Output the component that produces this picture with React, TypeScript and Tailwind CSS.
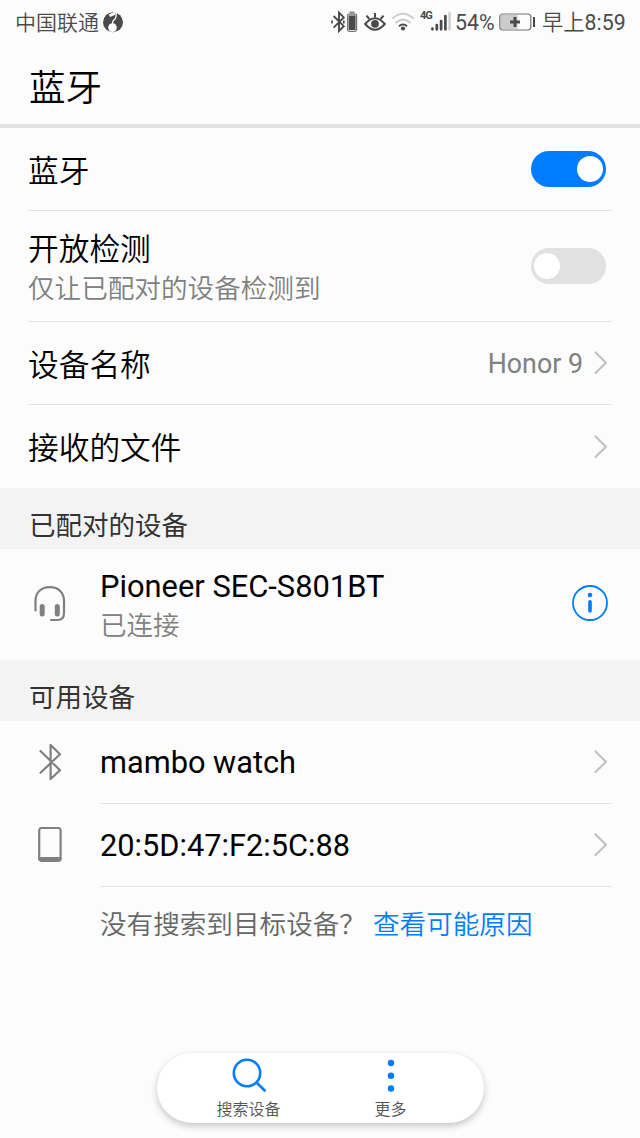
import React from "react";

const Chevron = () => (
  <svg className="h-6 w-3.5 shrink-0" viewBox="0 0 14 24" fill="none" stroke="#c2c2c2" strokeWidth="2.2" strokeLinecap="round" strokeLinejoin="round">
    <path d="M1.5 1.5L12 11.8L1.5 22" />
  </svg>
);

const Toggle = ({ on }: { on: boolean }) => (
  <div
    role="switch"
    aria-checked={on}
    className={`mr-px flex h-9 w-[75px] items-center rounded-full px-[3px] ${on ? "justify-end bg-[#007dff]" : "justify-start bg-[#e1e1e1]"}`}
  >
    <div className="h-[26px] w-[26px] rounded-full bg-white" />
  </div>
);

const StatusBar = () => (
  <div className="flex h-11 items-center pl-[15px] text-[21.3px] leading-[44px] text-[#4a4a4a]">
    <span className="w-[87px] pt-0.5 text-[21px] [font-weight:350]">中国联通</span>
    <svg className="h-[22px] w-[22px]" viewBox="0 0 22 22">
      <circle cx="11" cy="11.3" r="10" fill="#4a4a4a" />
      <path d="M7 3.8L14.8 1L13.6 7.2L10.8 10.2L10.5 14" fill="none" stroke="#fcfcfc" strokeWidth="1.3" />
      <path d="M7 3.8L13.8 1.6L13.4 3.8L8 6Z" fill="#fcfcfc" />
      <circle cx="10.5" cy="16.6" r="4.3" fill="#fcfcfc" />
    </svg>
    <svg className="ml-[207px] h-6 w-[27px]" viewBox="0 0 27 24" fill="none" stroke="#4a4a4a">
      <path d="M2.6 6L12.8 16.2L8 20.9V2.6L12.8 7.4L2.6 17.6" strokeWidth="1.9" />
      <path d="M1 10.4V13.4M12.8 10.4V13.4" strokeWidth="1.7" />
      <path d="M18.5 2.5H23.5" stroke="#888888" strokeWidth="2" />
      <rect x="16.6" y="4.1" width="9" height="17.2" rx="1.5" stroke="#777777" strokeWidth="1.2" />
      <rect x="17.6" y="5.4" width="7" height="14.6" fill="#4a4a4a" stroke="none" />
    </svg>
    <svg className="ml-[6px] h-6 w-[22px]" viewBox="0 0 22 24" fill="none" stroke="#4a4a4a" strokeWidth="2">
      <path d="M1.2 14Q11 2.5 20.8 14Q11 25.5 1.2 14Z" />
      <path d="M11 7.5V3M5.3 9L2.5 5.6M16.7 9L19.5 5.6" />
      <circle cx="11" cy="13.8" r="3.9" fill="#4a4a4a" stroke="none" />
    </svg>
    <svg className="ml-[5px] h-6 w-6" viewBox="0 0 24 24" fill="none" strokeWidth="2">
      <path d="M1.3 8.8Q12 -1.2 22.7 8.8" stroke="#d0d0d0" />
      <path d="M4.6 12.9Q12 6.2 19.4 12.9" stroke="#c8c8c8" />
      <path d="M8 16.2Q12 12.7 16 16.2" stroke="#4a4a4a" />
      <circle cx="12" cy="18.5" r="2.1" fill="#4a4a4a" stroke="none" />
    </svg>
    <span className="mb-3 ml-[5px] w-[11px] text-[11px] font-bold leading-5 tracking-[-1px]">4G</span>
    <svg className="h-6 w-5" viewBox="0 0 20 24" fill="none" stroke="#4a4a4a" strokeWidth="2.7" strokeLinecap="round">
      <path d="M1.4 18.5V19.3M5.8 15V19.3M10.1 11V19.3M14.4 6V19.3" />
      <path d="M18.6 3V19.3" stroke="#d2d2d2" />
    </svg>
    <span className="ml-1 w-[44px] pt-0.5">54%</span>
    <svg className="h-5 w-[38px]" viewBox="0 0 38 20" fill="none">
      <rect x="1.5" y="3" width="17" height="14" fill="#cccccc" />
      <rect x="0.8" y="2" width="31" height="16" rx="3" stroke="#777777" strokeWidth="1.2" />
      <path d="M11 10H21M16 5V15" stroke="#4a4a4a" strokeWidth="3" />
      <path d="M35 5V15" stroke="#4a4a4a" strokeWidth="2" />
    </svg>
    <span className="ml-[5px] whitespace-nowrap pt-0.5">
      <span className="[font-weight:350]">早上</span>8:59
    </span>
  </div>
);

const SectionTitle = ({ children }: { children: React.ReactNode }) => (
  <h2 className="h-[61px] bg-[#f3f3f3] pl-[29px] pt-[13px] text-[26.5px] leading-[50px] text-[#333333]">{children}</h2>
);

const availableDevices = [
  { name: "mambo watch", type: "bluetooth" },
  { name: "20:5D:47:F2:5C:88", type: "phone" },
];

const DeviceIcon = ({ type }: { type: string }) => (
  <svg className="mb-0.5 h-9 w-9 shrink-0" viewBox="0 0 36 36" fill="none" stroke="#808080" strokeWidth="2.2" strokeLinecap="round" strokeLinejoin="round">
    {type === "bluetooth" && <path d="M8.5 7L28 26.2L18.6 35V1L28 10.2L8.5 28.8" />}
    {type === "phone" && (
      <>
        <rect x="7.2" y="1" width="21.4" height="33" rx="2.5" />
        <path d="M8.5 32H27.5" strokeWidth="4" />
      </>
    )}
    {type === "headset" && (
      <>
        <path d="M3.5 24.5V15C3.5 6 9.5 1.2 18 1.2S32 6.5 32 15V27C32 31.5 29.7 34 25.5 34H19" />
        <path d="M10.2 20.5V28M25.3 20.5V28" strokeWidth="5" />
      </>
    )}
  </svg>
);

export default function App() {
  return (
    <div className="flex h-[1138px] w-[640px] flex-col overflow-hidden bg-[#fcfcfc] text-black [font-family:Roboto,'Noto_Sans_CJK_SC',sans-serif]">
      <StatusBar />
      <h1 className="h-[84px] border-b-4 border-[#e1e1e1] pl-[29px] pt-0.5 text-[36.5px] leading-[86px] [font-weight:350]">蓝牙</h1>

      <div className="mx-7 flex h-[83px] items-center justify-between border-b border-[#e3e3e3] pr-[5px] text-[30.7px]">
        <span className="pt-1.5 [font-weight:350]">蓝牙</span>
        <Toggle on />
      </div>
      <div className="mx-7 flex h-[111px] items-center justify-between border-b border-[#e3e3e3] pr-[5px]">
        <div className="pt-1.5 [font-weight:350]">
          <div className="text-[30.7px] leading-10">开放检测</div>
          <div className="text-[26.6px] leading-[38px] text-[#808080]">仅让已配对的设备检测到</div>
        </div>
        <Toggle on={false} />
      </div>
      <div className="mx-7 flex h-[83px] items-center border-b border-[#e3e3e3] pr-1 text-[30.7px]">
        <span className="flex-1 pt-1.5 [font-weight:350]">设备名称</span>
        <span className="mr-[11px] pt-[3px] text-[26.8px] text-[#808080]">Honor 9</span>
        <Chevron />
      </div>
      <div className="mx-7 flex h-[83px] items-center justify-between pr-1 text-[30.7px]">
        <span className="pt-1.5 [font-weight:350]">接收的文件</span>
        <Chevron />
      </div>

      <SectionTitle>已配对的设备</SectionTitle>
      <div className="flex h-[111px] items-center pl-8 pr-8">
        <DeviceIcon type="headset" />
        <div className="ml-8 flex-1 pt-[3px]">
          <div className="text-[30.85px] leading-10">Pioneer SEC-S801BT</div>
          <div className="text-[26.5px] leading-[38px] text-[#808080] [font-weight:350]">已连接</div>
        </div>
        <svg className="mb-[3px] h-9 w-9" viewBox="0 0 36 36" fill="none" stroke="#007dff">
          <circle cx="18" cy="18" r="17" strokeWidth="1.8" />
          <circle cx="18" cy="10" r="2.3" fill="#007dff" stroke="none" />
          <path d="M18 16.7V26" strokeWidth="3.6" strokeLinecap="round" />
        </svg>
      </div>

      <SectionTitle>可用设备</SectionTitle>
      {availableDevices.map((device) => (
        <div key={device.name} className="flex h-[83px] items-center pl-8 pr-7 last-of-type:h-[84px]">
          <DeviceIcon type={device.type} />
          <div className="ml-8 flex h-full flex-1 items-center justify-between border-b border-[#e3e3e3] pr-1 text-[30.75px]">
            <span className="pt-[3px]">{device.name}</span>
            <Chevron />
          </div>
        </div>
      ))}
      <p className="flex pl-[100px] pt-[19px] text-[26.6px] leading-[38px] text-[#666666] [font-weight:350]">
        <span className="w-[273px] whitespace-nowrap">没有搜索到目标设备？</span>
        <a className="text-[#007dff]">查看可能原因</a>
      </p>

      <div className="mx-auto mb-[15px] mt-auto flex h-[70px] w-[327px] justify-between rounded-full bg-white pl-[60px] pr-[77px] text-base leading-6 text-[#555555] shadow-[0_3px_7px_rgba(0,0,0,0.22)]">
        <button className="flex flex-col items-center gap-1 pt-[5px]">
          <svg className="h-9 w-9" viewBox="0 0 36 36" fill="none" stroke="#007dff" strokeWidth="2.6" strokeLinecap="round">
            <circle cx="16" cy="15" r="13.2" />
            <path d="M25.7 24.7L33.7 32.5" />
          </svg>
          <span className="[font-weight:350]">搜索设备</span>
        </button>
        <button className="-mr-0.5 flex flex-col items-center gap-1 pt-[5px]">
          <svg className="h-9 w-9" viewBox="0 0 36 36" fill="#007dff">
            <circle cx="18" cy="5" r="3.2" />
            <circle cx="18" cy="17.7" r="3.2" />
            <circle cx="18" cy="30.5" r="3.2" />
          </svg>
          <span className="[font-weight:350]">更多</span>
        </button>
      </div>
    </div>
  );
}
